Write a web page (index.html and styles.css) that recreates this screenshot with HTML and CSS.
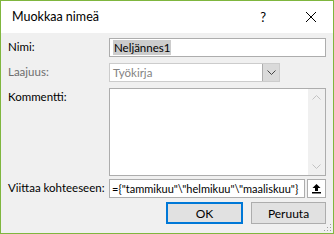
FILE: index.html
```html
<!DOCTYPE html>
<html lang="fi">
  <head>
    <meta charset="UTF-8" />
    <title>Muokkaa nimeä</title>
    <link rel="stylesheet" href="styles.css">
  </head>
  <body>
    <div class="window">
      <div class="titlebar">
        <span class="title">Muokkaa nimeä</span>
        <span class="help">?</span>
        <svg class="close" width="12" height="12" viewBox="0 0 12 12">
          <path d="M1 1 L11 11 M11 1 L1 11" stroke="#000" stroke-width="1" fill="none" />
        </svg>
      </div>
      <div class="content">
        <div class="row">
          <label class="label">Nimi:</label>
          <div class="field input"><span class="selected">Neljännes1</span></div>
        </div>
        <div class="row">
          <label class="label disabled">Laajuus:</label>
          <div class="field select">
            <span class="select-text">Työkirja</span>
            <span class="drop">
              <svg width="9" height="5" viewBox="0 0 9 5">
                <path d="M0.5 0.5 L4.5 4.5 L8.5 0.5" stroke="#444" fill="none" />
              </svg>
            </span>
          </div>
        </div>
        <div class="row">
          <label class="label">Kommentti:</label>
          <div class="field textarea">
            <div class="scrollbar">
              <svg width="9" height="5" viewBox="0 0 9 5">
                <path d="M0.5 4.5 L4.5 0.5 L8.5 4.5" stroke="#c2c2c2" fill="none" />
              </svg>
              <svg width="9" height="5" viewBox="0 0 9 5">
                <path d="M0.5 0.5 L4.5 4.5 L8.5 0.5" stroke="#c2c2c2" fill="none" />
              </svg>
            </div>
          </div>
        </div>
        <div class="row">
          <label class="label">Viittaa kohteeseen:</label>
          <div class="ref">
            <div class="field input ref-input">={"tammikuu"\"helmikuu"\"maaliskuu"}</div>
            <span class="collapse">
              <svg width="11" height="11" viewBox="0 0 11 11">
                <path d="M5.5 1 L1.5 5 H4 V8 H7 V5 H9.5 Z" fill="#000" />
                <rect x="1" y="9" width="9" height="1.5" fill="#000" />
              </svg>
            </span>
          </div>
        </div>
        <div class="buttons">
          <button class="btn default">OK</button>
          <button class="btn">Peruuta</button>
        </div>
        <svg class="grip" width="10" height="10" viewBox="0 0 10 10">
          <rect x="8" y="2" width="1" height="1" fill="#a0a0a0" />
          <rect x="5" y="5" width="1" height="1" fill="#a0a0a0" />
          <rect x="8" y="5" width="1" height="1" fill="#a0a0a0" />
          <rect x="2" y="8" width="1" height="1" fill="#a0a0a0" />
          <rect x="5" y="8" width="1" height="1" fill="#a0a0a0" />
          <rect x="8" y="8" width="1" height="1" fill="#a0a0a0" />
        </svg>
      </div>
    </div>
  </body>
</html>
```
FILE: styles.css
```css
body {
  margin: 0;
  font-family: Lato, "Noto Sans", sans-serif;
  font-size: 11.5px;
  color: #000;
}
.window {
  width: 332px;
  height: 232px;
  border: 1px solid #7fb63e;
  display: flex;
  flex-direction: column;
  background: #f0f0f0;
}
.titlebar {
  height: 32px;
  background: #fff;
  display: flex;
  align-items: center;
  padding-left: 11px;
}
.title {
  flex: 1;
  font-size: 12.5px;
  margin-top: -1px;
}
.help {
  font-size: 13px;
  margin-right: 39px;
}
.close {
  margin-right: 16px;
}
.content {
  flex: 1;
  position: relative;
  padding: 5px 7px 0 7px;
}
.row {
  display: flex;
  margin-bottom: 6px;
}
.label {
  width: 101px;
  flex: none;
  line-height: 17px;
  white-space: nowrap;
}
.label.disabled {
  color: #6d6d6d;
}
.field {
  box-sizing: border-box;
  border: 1px solid #adadad;
  background: #fff;
}
.input {
  width: 217px;
  height: 19px;
  padding: 0 3px;
  line-height: 17px;
  white-space: nowrap;
  overflow: hidden;
}
.selected {
  background: #cccccc;
  padding: 1px 1px;
}
.select {
  width: 171px;
  height: 19px;
  display: flex;
  border-color: #cccccc;
}
.select-text {
  flex: 1;
  color: #838383;
  padding-left: 3px;
  line-height: 17px;
}
.drop {
  width: 16px;
  background: #dadada;
  border-left: 1px solid #adadad;
  display: flex;
  align-items: center;
  justify-content: center;
}
.textarea {
  width: 217px;
  height: 88px;
  display: flex;
  justify-content: flex-end;
  margin-bottom: -3px;
}
.scrollbar {
  width: 17px;
  background: #f0f0f0;
  display: flex;
  flex-direction: column;
  justify-content: space-between;
  align-items: center;
  padding: 6px 0 6px 0;
}
.ref {
  display: flex;
}
.ref-input {
  width: 196px;
  height: 19px;
  padding: 0 2px;
  font-size: 11px;
}
.collapse {
  width: 19px;
  height: 19px;
  box-sizing: border-box;
  margin-left: 2px;
  border: 1px solid #adadad;
  background: #fff;
  display: flex;
  align-items: center;
  justify-content: center;
}
.buttons {
  display: flex;
  justify-content: flex-end;
  gap: 8px;
  margin-top: -2px;
}
.btn {
  width: 75px;
  height: 22px;
  font-family: inherit;
  font-size: 12px;
  background: #e1e1e1;
  border: 1px solid #adadad;
  padding: 0;
}
.btn.default {
  width: 77px;
  border: 2px solid #0078d7;
}
.grip {
  position: absolute;
  right: 1px;
  bottom: 1px;
}
```
